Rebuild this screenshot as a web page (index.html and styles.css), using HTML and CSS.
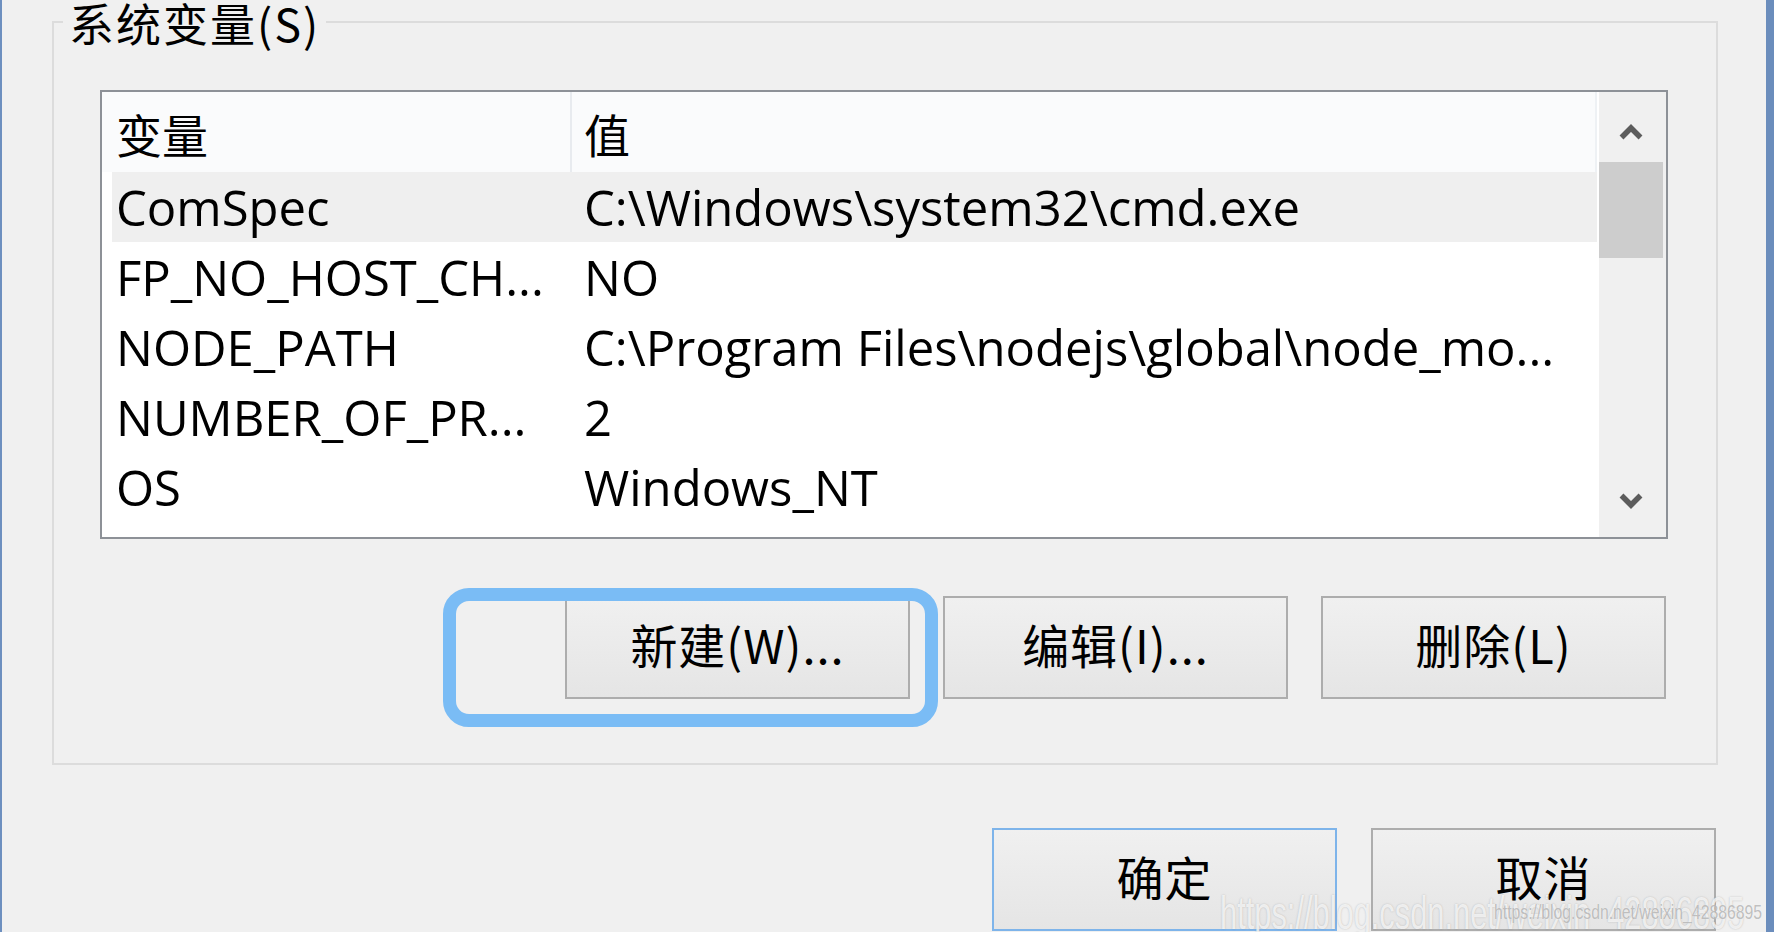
FILE: index.html
```html
<!DOCTYPE html>
<html lang="zh-CN">
<head>
<meta charset="utf-8">
<title>系统变量</title>
<link rel="stylesheet" href="styles.css">
</head>
<body>
<div class="window">
  <fieldset class="group">
    <legend class="group-title">系统变量(S)</legend>
    <div class="listview">
      <div class="lv-main">
        <div class="lv-header">
          <div class="hcol hcol-name">变量</div>
          <div class="hcol hcol-value">值</div>
        </div>
        <div class="lv-row selected">
          <div class="cell cell-name">ComSpec</div>
          <div class="cell cell-value">C:\Windows\system32\cmd.exe</div>
        </div>
        <div class="lv-row">
          <div class="cell cell-name">FP_NO_HOST_CH...</div>
          <div class="cell cell-value">NO</div>
        </div>
        <div class="lv-row">
          <div class="cell cell-name">NODE_PATH</div>
          <div class="cell cell-value">C:\Program Files\nodejs\global\node_mo...</div>
        </div>
        <div class="lv-row">
          <div class="cell cell-name">NUMBER_OF_PR...</div>
          <div class="cell cell-value">2</div>
        </div>
        <div class="lv-row">
          <div class="cell cell-name">OS</div>
          <div class="cell cell-value">Windows_NT</div>
        </div>
      </div>
      <div class="scrollbar">
        <div class="sb-btn sb-up">
          <svg class="chev" viewBox="0 0 24 18" width="24" height="18"><path d="M2.5 15.5 L12 6 L21.5 15.5" /></svg>
        </div>
        <div class="sb-thumb"></div>
        <div class="sb-track"></div>
        <div class="sb-btn sb-down">
          <svg class="chev" viewBox="0 0 24 18" width="24" height="18"><path d="M2.5 2.5 L12 12 L21.5 2.5" /></svg>
        </div>
      </div>
    </div>
    <div class="group-actions">
      <div class="focus-wrap">
        <button class="btn">新建(W)...</button>
        <span class="focus-ring"></span>
      </div>
      <button class="btn">编辑(I)...</button>
      <button class="btn">删除(L)</button>
    </div>
  </fieldset>
  <div class="dialog-actions">
    <button class="btn btn-default">确定</button>
    <button class="btn">取消</button>
  </div>
  <div class="watermark wm-big">https://blog.csdn.net/weixin_42886895</div>
  <div class="watermark wm-small">https://blog.csdn.net/weixin_42886895</div>
</div>
</body>
</html>
```

FILE: styles.css
```css
* { box-sizing: border-box; }

html, body {
  margin: 0;
  padding: 0;
  background: #f0f0f0;
}

body {
  width: 1774px;
  height: 932px;
  overflow: hidden;
  font-family: "Open Sans", "Noto Sans CJK SC", sans-serif;
  color: #000;
}

.window {
  position: relative;
  height: 932px;
  display: flex;
  flex-direction: column;
  border-left: 2px solid #6d8fbf;
  border-right: 8px solid #6b8dbc;
  overflow: hidden;
}

/* ---------- group box ---------- */
.group {
  margin: 0 48px 0 50px;
  padding: 0 0 64px 0;
  border: 2px solid #dcdcdc;
  min-width: 0;
}

.group-title {
  margin-left: 9px;
  padding: 1px 6px 0 6px;
  line-height: 43px;
  font-size: 45px;
  letter-spacing: 2px;
  font-family: "Noto Sans CJK SC", "Open Sans", sans-serif;
  color: #000;
}

/* ---------- list view ---------- */
.listview {
  margin: 46px 48px 0 46px;
  height: 449px;
  border: 2px solid #8d9197;
  background: #fff;
  display: flex;
}

.lv-main {
  flex: 1;
  min-width: 0;
  display: flex;
  flex-direction: column;
}

.lv-header {
  height: 80px;
  background: #fafbfc;
  display: flex;
  align-items: stretch;
  border-right: 2px solid #eef1f4;
}

.hcol {
  display: flex;
  align-items: center;
  padding-top: 2px;
  font-size: 46px;
  font-family: "Noto Sans CJK SC", sans-serif;
}

.hcol-name {
  width: 470px;
  padding-left: 14px;
  border-right: 2px solid #e8ebef;
}

.hcol-value {
  padding-left: 12px;
}

.lv-row {
  height: 70px;
  margin-left: 10px;
  display: flex;
  align-items: center;
  font-size: 49px;
  white-space: nowrap;
}

.lv-row.selected {
  background: #efefef;
}

.cell-name {
  width: 460px;
  padding-left: 4px;
  overflow: hidden;
}

.cell-value {
  padding-left: 12px;
}

/* ---------- scrollbar ---------- */
.scrollbar {
  width: 67px;
  margin-left: 2px;
  background: #f0f0f0;
  display: flex;
  flex-direction: column;
}

.sb-btn {
  height: 70px;
  display: flex;
  align-items: center;
  justify-content: center;
  padding-right: 3px;
}

.sb-up { padding-top: 7px; }

.chev path {
  fill: none;
  stroke: #5c5c5c;
  stroke-width: 5.5;
  stroke-linecap: butt;
  stroke-linejoin: miter;
}

.sb-thumb {
  height: 96px;
  margin-right: 3px;
  background: #cdcdcd;
}

.sb-track { flex: 1; }

/* ---------- buttons ---------- */
.btn {
  width: 345px;
  height: 103px;
  padding: 0 0 8px 0;
  border: 2px solid #adadad;
  border-radius: 0;
  background: linear-gradient(#f0f0f0, #e5e5e5);
  font-family: "Noto Sans CJK SC", "Open Sans", sans-serif;
  font-size: 47px;
  letter-spacing: 1px;
  color: #000;
  display: flex;
  align-items: center;
  justify-content: center;
}

.btn-default {
  border-color: #7eb4ea;
}

.group-actions {
  margin: 57px 50px 0 0;
  display: flex;
  justify-content: flex-end;
  gap: 33px;
}

.focus-wrap {
  position: relative;
}

.focus-ring {
  position: absolute;
  left: -122px;
  right: -28px;
  top: -8px;
  bottom: -28px;
  border: 13px solid #7abcf5;
  border-radius: 26px;
  pointer-events: none;
}

.dialog-actions {
  margin: 63px 50px 0 0;
  display: flex;
  justify-content: flex-end;
  gap: 34px;
}

/* ---------- watermark ---------- */
.watermark {
  position: absolute;
  white-space: nowrap;
  font-family: "Liberation Sans", sans-serif;
  transform-origin: left top;
  pointer-events: none;
}

.wm-big {
  left: 1218px;
  top: 886px;
  font-size: 46px;
  color: rgba(255, 255, 255, 0.75);
  text-shadow: 0 0 2px rgba(120, 120, 120, 0.45);
  transform: scaleX(0.67);
}

.wm-small {
  left: 1492px;
  top: 900px;
  font-size: 21px;
  color: rgba(140, 140, 140, 0.55);
  text-shadow: 0 0 1px rgba(255, 255, 255, 0.8);
  transform: scaleX(0.75);
}
```
